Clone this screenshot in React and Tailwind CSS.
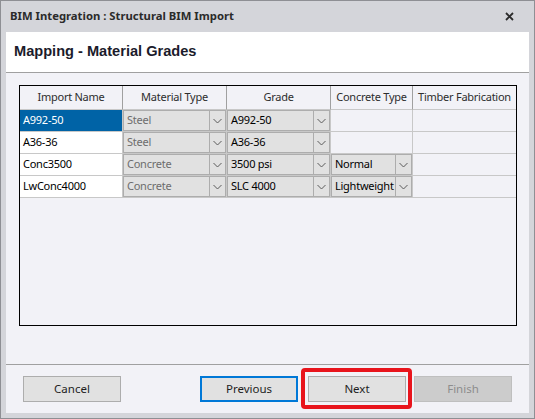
import React from 'react'

const rows = [
    { name: 'A992-50', type: 'Steel', grade: 'A992-50', concrete: null, selected: true },
    { name: 'A36-36', type: 'Steel', grade: 'A36-36', concrete: null },
    { name: 'Conc3500', type: 'Concrete', grade: '3500 psi', concrete: 'Normal' },
    { name: 'LwConc4000', type: 'Concrete', grade: 'SLC 4000', concrete: 'Lightweight' },
]

const Chevron = () => (
    <svg width="9" height="6" viewBox="0 0 9 6" className="text-[#5a5a5a]">
        <polyline points="0.5,1 4.5,5 8.5,1" fill="none" stroke="currentColor" strokeWidth="1" />
    </svg>
)

// combo box filling a grid cell
const Combo = ({ value, dim }) => (
    <div className="h-full flex bg-[#e1e1e1] border border-[#adadad]">
        <div className={`flex-1 flex items-center pl-[3px] whitespace-nowrap overflow-hidden ${dim ? 'text-[#6d6d6d]' : 'text-black'}`}>{value}</div>
        <div className="w-[16px] shrink-0 border-l border-[#adadad] flex items-center justify-center">
            <Chevron />
        </div>
    </div>
)

const Button = ({ children, className = '' }) => (
    <div className={`w-[98px] h-[26px] flex items-center justify-center text-[11.5px] ${className}`}>
        {children}
    </div>
)

const App = () => {
    return (
        <div className="w-[535px] h-[419px] bg-[#d4d5da] border border-[#8e8f94] flex flex-col font-['Segoe_UI','Noto_Sans',sans-serif] text-[11px] text-[#1e1e1e]">
            {/* Title bar */}
            <div className="h-[31px] shrink-0 flex items-center justify-between pl-[9px] pr-[20px]">
                <span className="font-bold text-[11.3px] text-[#2b2b2b] whitespace-nowrap">BIM Integration : Structural BIM Import</span>
                <svg width="9" height="9" viewBox="0 0 9 9">
                    <path d="M1 1 L8 8 M8 1 L1 8" stroke="#2b2b2b" strokeWidth="1.8" />
                </svg>
            </div>

            {/* Client area */}
            <div className="flex-1 mx-[5px] mb-[5px] bg-[#f2f2f7] flex flex-col min-h-0">
                <div className="h-[41px] shrink-0 bg-white border-b border-[#a0a0a0] flex items-center pl-[8px]">
                    <span className="font-['Liberation_Sans',Arial,sans-serif] font-bold text-[14.6px] text-[#1b1b2b]">Mapping - Material Grades</span>
                </div>

                <div className="flex-1 pt-[12px] pl-[13px] pr-[12px] pb-[38px] min-h-0">
                    <div className="h-full border border-black tracking-[-0.25px]">
                        <div className="grid grid-cols-[103px_104px_104px_82px_1fr] grid-rows-[24px_22px_22px_22px_22px]">
                            {['Import Name', 'Material Type', 'Grade', 'Concrete Type', 'Timber Fabrication'].map((h, i) => (
                                <div key={h} className={`flex items-center justify-center whitespace-nowrap text-[#2d2d2d] border-b border-[#c8c8c8] ${i < 4 ? 'border-r border-r-[#a0a0a0]' : ''}`}>
                                    {h}
                                </div>
                            ))}
                            {rows.map(r => (
                                <React.Fragment key={r.name}>
                                    <div className={`flex items-center pl-[3px] border-r border-b border-[#c8c8c8] ${r.selected ? 'bg-[#0063a6] text-white' : 'bg-white text-black'}`}>
                                        {r.name}
                                    </div>
                                    <div className="border-r border-b border-[#c8c8c8]"><Combo value={r.type} dim /></div>
                                    <div className="border-r border-b border-[#c8c8c8]"><Combo value={r.grade} /></div>
                                    <div className="border-r border-b border-[#c8c8c8]">
                                        {r.concrete && <Combo value={r.concrete} />}
                                    </div>
                                    <div className="border-b border-[#c8c8c8]" />
                                </React.Fragment>
                            ))}
                        </div>
                    </div>
                </div>

                {/* Footer */}
                <div className="h-[49px] shrink-0 border-t border-[#a0a0a0] flex items-center px-[17px]">
                    <Button className="bg-[#e1e1e1] border border-[#adadad] text-[#1e1e1e]">Cancel</Button>
                    <div className="flex-1" />
                    <Button className="bg-[#e1e1e1] border-2 border-[#0078d7] text-[#1e1e1e]">Previous</Button>
                    <div className="relative ml-[10px]">
                        <Button className="bg-[#e1e1e1] border border-[#adadad] text-[#1e1e1e]">Next</Button>
                        <div className="absolute -top-[8px] -bottom-[7px] -left-[7px] -right-[6px] border-[4px] border-[#e8141c] rounded-[4px]" />
                    </div>
                    <Button className="ml-[8px] bg-[#cccccc] border border-[#bfbfbf] text-[#8d8d8d]">Finish</Button>
                </div>
            </div>
        </div>
    )
}

export default App
